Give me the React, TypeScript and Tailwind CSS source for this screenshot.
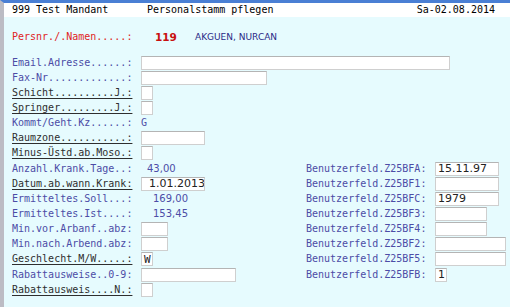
const mono = "font-['DejaVu_Sans_Mono',monospace]";
const sans = "font-['DejaVu_Sans',sans-serif]";

type Row = {
  label: string;
  u?: boolean;
  input?: number;
  text?: string;
  value?: string;
  valueOffset?: number;
  monoValue?: boolean;
};

const leftRows: Row[] = [
  { label: 'Email.Adresse......:', input: 309 },
  { label: 'Fax-Nr.............:', input: 126 },
  { label: 'Schicht..........J.:', u: true, input: 12 },
  { label: 'Springer.........J.:', u: true, input: 12 },
  { label: 'Kommt/Geht.Kz......:', value: 'G', monoValue: true },
  { label: 'Raumzone...........:', u: true, input: 64 },
  { label: 'Minus-Üstd.ab.Moso.:', u: true, input: 12 },
  { label: 'Anzahl.Krank.Tage..:', value: '43,00', valueOffset: 6 },
  { label: 'Datum.ab.wann.Krank:', u: true, input: 64, text: '1.01.2013' },
  { label: 'Ermitteltes.Soll...:', value: '169,00', valueOffset: 12 },
  { label: 'Ermitteltes.Ist....:', value: '153,45', valueOffset: 12 },
  { label: 'Min.vor.Arbanf..abz:', input: 27 },
  { label: 'Min.nach.Arbend.abz:', input: 27 },
  { label: 'Geschlecht.M/W.....:', u: true, input: 12, text: 'W' },
  { label: 'Rabattausweise..0-9:', input: 95 },
  { label: 'Rabattausweis....N.:', u: true, input: 12 },
];

const rightRows: Row[] = [
  { label: 'Benutzerfeld.Z25BFA:', input: 64, text: '15.11.97' },
  { label: 'Benutzerfeld.Z25BF1:', input: 64 },
  { label: 'Benutzerfeld.Z25BFC:', input: 64, text: '1979' },
  { label: 'Benutzerfeld.Z25BF3:', input: 52 },
  { label: 'Benutzerfeld.Z25BF4:', input: 52 },
  { label: 'Benutzerfeld.Z25BF2:', input: 71 },
  { label: 'Benutzerfeld.Z25BF5:', input: 71 },
  { label: 'Benutzerfeld.Z25BFB:', input: 12, text: '1' },
];

function Field({ row }: { row: Row }) {
  return (
    <div className="flex items-center">
      <span
        className={`w-[129px] shrink-0 whitespace-pre text-[10px] leading-none ${mono} ${
          row.u ? 'text-[#2e2e2e] underline underline-offset-[1.5px]' : 'text-[#4c4ca6]'
        }`}
      >
        {row.label}
      </span>
      {row.input !== undefined && (
        <div
          className={`flex h-[14px] shrink-0 items-center overflow-hidden border border-[#cfcfcf] border-t-[#b4b4b4] bg-white pl-[2px] text-[11px] leading-none text-[#222] ${
            row.text === 'W' ? mono : sans
          }`}
          style={{ width: row.input }}
        >
          {row.text === '1.01.2013' ? <span className="pl-[5px]">{row.text}</span> : row.text}
        </div>
      )}
      {row.value !== undefined && (
        <span
          className={`text-[10px] leading-none text-[#4c4ca6] ${row.monoValue ? mono : sans}`}
          style={{ marginLeft: row.valueOffset ?? 0 }}
        >
          {row.value}
        </span>
      )}
    </div>
  );
}

export default function App() {
  return (
    <div className="h-[307px] w-[510px] overflow-hidden border-l-[4px] border-t-[3px] border-l-[#bcbcc4] border-t-[#4a7fd4] bg-[#e6fbfe]">
      <div className={`flex h-[14px] items-center bg-white pl-[8px] pr-[15px] text-[10px] leading-none text-black ${mono}`}>
        <span className="w-[135px]">999 Test Mandant</span>
        <span>Personalstamm pflegen</span>
        <span className="ml-auto">Sa-02.08.2014</span>
      </div>

      <div className="flex h-[25px] items-end pl-[8px]">
        <span className={`w-[143px] text-[10px] leading-none text-[#e02424] ${mono}`}>Persnr./.Namen.....:</span>
        <span className={`w-[40px] text-[10.5px] font-bold leading-none text-[#c81010] ${sans}`}>119</span>
        <span className={`text-[9px] leading-none text-[#2a2a86] ${sans}`}>AKGUEN, NURCAN</span>
      </div>

      <div className="mt-[13px] flex flex-col pl-[8px]">
        {leftRows.map((row, i) => {
          const right = i >= 7 ? rightRows[i - 7] : undefined;
          return (
            <div key={row.label} className="flex h-[15.15px] items-center">
              <div className="w-[294px] shrink-0">
                <Field row={row} />
              </div>
              {right && <Field row={right} />}
            </div>
          );
        })}
      </div>
    </div>
  );
}
